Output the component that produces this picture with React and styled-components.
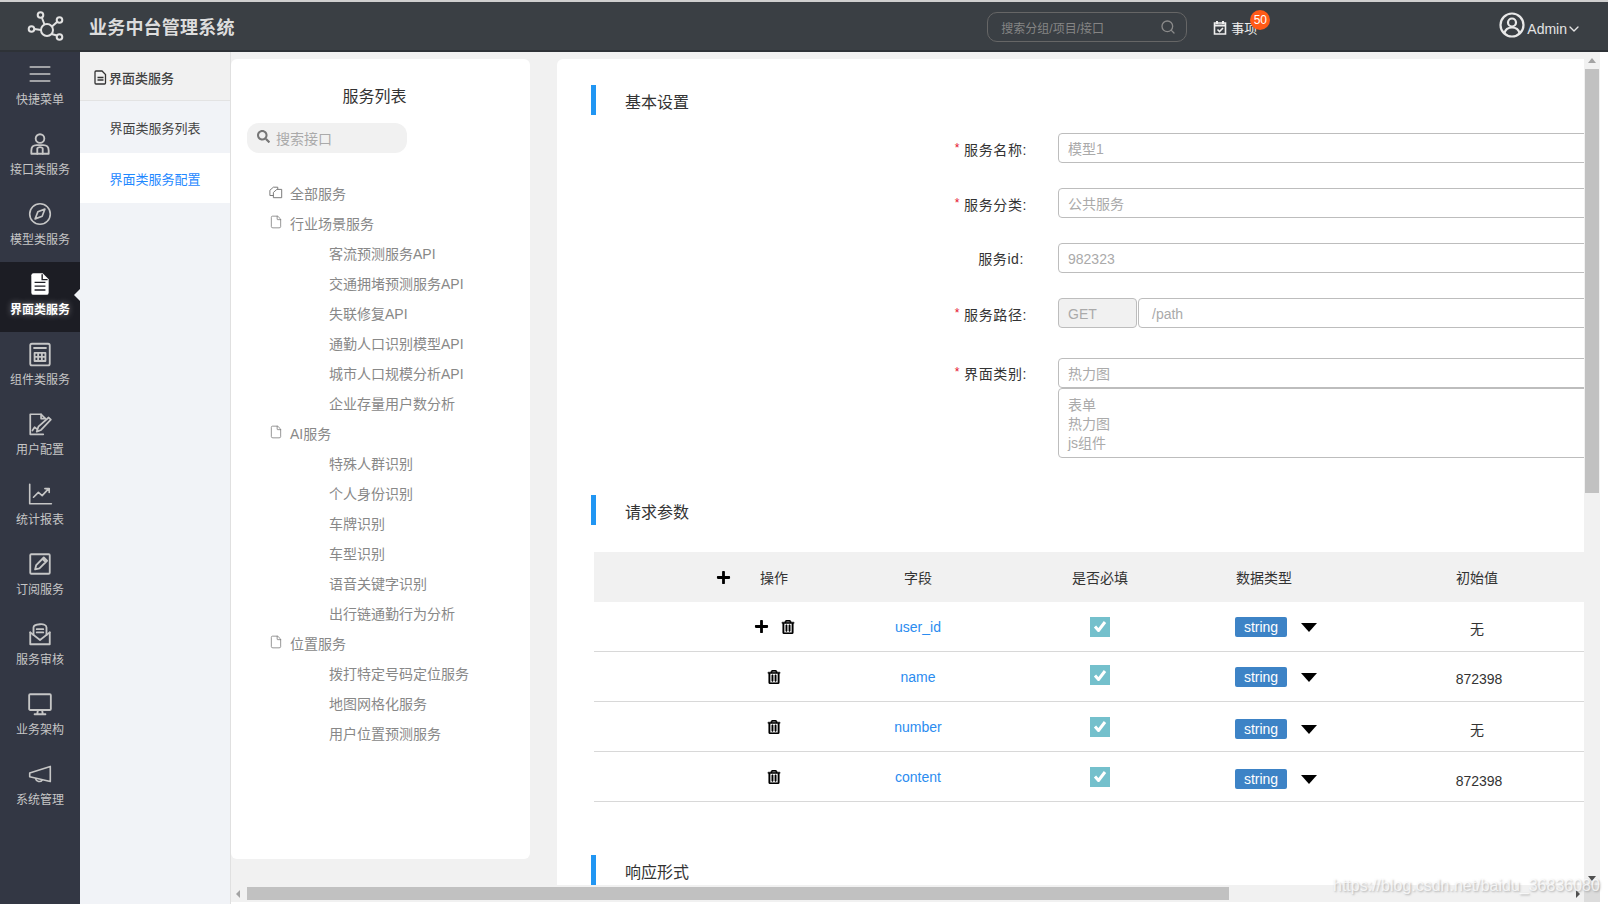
import React from 'react'
import styled, {createGlobalStyle} from 'styled-components'
import {FaPlus, FaRegTrashAlt, FaSearch} from 'react-icons/fa'
import {Search, ChevronDown, File} from 'lucide-react'

const Global = createGlobalStyle`
    html, body {
        margin: 0;
        padding: 0;
        background: #fff;
    }
    body {
        font-family: "Liberation Sans", "Noto Sans CJK SC", sans-serif;
        color: #333;
    }
`

const Page = styled.div`
    width: 1608px;
    height: 904px;
    overflow: hidden;
    display: flex;
    flex-direction: column;
    position: relative;
`

const Header = styled.header`
    height: 48px;
    flex: none;
    display: flex;
    align-items: center;
    background: #3a3f44;
    border-top: 2px solid #cfcfcf;
    border-bottom: 2px solid #2e3237;
    color: #ddd;
`

const Logo = styled.div`
    width: 89px;
    display: flex;
    justify-content: center;
`

const AppTitle = styled.h1`
    margin: 0;
    font-size: 18px;
    font-weight: 700;
    color: #ddd;
    letter-spacing: 0.2px;
    flex: 1;
`

const SearchBox = styled.div`
    width: 200px;
    height: 30px;
    border: 1px solid #666;
    border-radius: 10px;
    display: flex;
    align-items: center;
    justify-content: space-between;
    padding: 0 10px 0 13px;
    box-sizing: border-box;
    color: #858585;
    font-size: 12px;
    margin: 2px 26px 0 0;
`

const Todo = styled.div`
    position: relative;
    width: 286px;
    display: flex;
    align-items: center;
    gap: 4px;
    font-size: 13px;
    padding-top: 2px;
    color: #eee;
`

const Badge = styled.span`
    position: absolute;
    left: 37px;
    top: -6px;
    width: 20px;
    height: 20px;
    border-radius: 50%;
    background: #ff5a17;
    color: #fff;
    font-size: 12px;
    line-height: 20px;
    text-align: center;
`

const UserBox = styled.div`
    display: flex;
    align-items: center;
    padding-right: 26px;
    font-size: 14px;
    color: #e4e4e4;

    > svg:first-child {
        margin-top: -2px;
    }

    > svg:last-child {
        margin: 6px 0 0 -1px;
    }
`

const AdminName = styled.span`
    margin: 6px 0 0 2px;
`

const Body = styled.div`
    flex: 1;
    min-height: 0;
    display: flex;
`

const Sidebar = styled.nav`
    width: 80px;
    flex: none;
    background: #333744;
`

const NavItem = styled.div`
    position: relative;
    height: 70px;
    box-sizing: border-box;
    display: flex;
    flex-direction: column;
    align-items: center;
    padding-top: 9px;
    gap: 4px;
    font-size: 12px;
    line-height: 18px;
    color: ${({$active}) => $active ? '#fff' : '#c6c6c6'};
    font-weight: ${({$active}) => $active ? 700 : 400};
    background: ${({$active}) => $active ? '#1c1d24' : 'transparent'};
    text-shadow: ${({$active}) => $active ? '0 0 6px rgba(255,255,255,.45)' : 'none'};

    svg {
        width: 26px;
        height: 26px;
        display: block;
    }

    ${({$active}) => $active && `
        &::after {
            content: '';
            position: absolute;
            right: 0;
            top: 27px;
            border: 6px solid transparent;
            border-left: 0;
            border-right-color: #f1f3f7;
        }
    `}
`

const SubMenu = styled.aside`
    width: 151px;
    flex: none;
    box-sizing: border-box;
    background: #f1f3f7;
    border-right: 1px solid #e0e0e0;
`

const SubHead = styled.div`
    height: 49px;
    box-sizing: border-box;
    display: flex;
    align-items: center;
    gap: 2px;
    padding: 2px 0 0 14px;
    background: #f1f1f1;
    border-bottom: 1px solid #e3e3e3;
    font-size: 13px;
    font-weight: 500;
    color: #444;
`

const SubItem = styled.div`
    height: ${({$active}) => $active ? '50px' : '52px'};
    display: flex;
    align-items: center;
    justify-content: center;
    font-size: 13px;
    color: ${({$active}) => $active ? '#1e88ff' : '#444'};
    background: ${({$active}) => $active ? '#fff' : 'transparent'};
`

const Workspace = styled.div`
    flex: 1;
    min-width: 0;
    display: flex;
    flex-direction: column;
    padding-bottom: 2px;
`

const WorkRow = styled.div`
    flex: 1;
    min-height: 0;
    display: flex;
`

const Panels = styled.div`
    flex: 1;
    min-width: 0;
    display: flex;
    gap: 27px;
    background: #f1f1f1;
    padding-top: 7px;
`

const ServiceCard = styled.section`
    width: 299px;
    height: 800px;
    flex: none;
    background: #fff;
    border-radius: 6px;
    box-sizing: border-box;
    padding-top: 28px;
`

const CardTitle = styled.div`
    font-size: 16px;
    line-height: 20px;
    text-align: center;
    margin-bottom: 16px;
    padding-right: 12px;
`

const TreeSearch = styled.div`
    width: 160px;
    height: 30px;
    margin-left: 16px;
    border-radius: 12px;
    background: #f1f1f1;
    display: flex;
    align-items: center;
    gap: 6px;
    padding-left: 10px;
    box-sizing: border-box;
    color: #aaa;
    font-size: 14px;

    svg {
        color: #777;
        margin-top: -3px;
    }
`

const Tree = styled.ul`
    list-style: none;
    margin: 25px 0 0;
    padding: 0;
`

const TreeRow = styled.li`
    height: 30px;
    display: flex;
    align-items: center;
    gap: 7px;
    padding-left: ${({$child}) => $child ? '98px' : '38px'};
    font-size: 14px;
    color: #888;

    svg {
        width: 14px;
        height: 14px;
        margin-top: -2px;
    }
`

const MainCard = styled.main`
    flex: 1;
    min-width: 0;
    background: #fff;
    border-radius: 6px 0 0 0;
    overflow: hidden;
    padding-top: 26px;
`

const SectionHead = styled.div`
    height: 30px;
    margin: ${({$top}) => $top || 0}px 0 0 34px;
    border-left: 5px solid #2196f3;
    padding-left: 29px;
    font-size: 16px;
    line-height: 36px;
    color: #333;
`

const Form = styled.div`
    margin-top: 18px;
    display: grid;
    grid-template-columns: 473px 560px;
    column-gap: 28px;
    row-gap: 25px;
`

const Label = styled.div`
    font-size: 14px;
    line-height: 20px;
    padding-top: ${({$top}) => $top || 5}px;
    text-align: right;
    letter-spacing: .6px;
    color: #333;
    padding-right: ${({$short}) => $short ? '6px' : '3px'};

    i {
        color: #e5142d;
        font-style: normal;
        font-size: 12px;
        vertical-align: 3px;
        margin-right: 4px;
    }
`

const Field = styled.div`
    height: 30px;
    box-sizing: border-box;
    border: 1px solid #bdbdbd;
    border-radius: 4px;
    padding-left: 9px;
    font-size: 14px;
    line-height: 30px;
    color: #aaa;
`

const PathGroup = styled.div`
    display: flex;
    gap: 1px;
`

const MethodField = styled(Field)`
    width: 79px;
    flex: none;
    background: #f1f1f1;
`

const PathField = styled(Field)`
    flex: 1;
    padding-left: 13px;
`

const FieldStack = styled.div`
    display: flex;
    flex-direction: column;
    margin-top: 5px;
`

const OptionBox = styled.div`
    height: 70px;
    box-sizing: border-box;
    border: 1px solid #bdbdbd;
    border-radius: 4px;
    padding: 7px 0 0 9px;
    font-size: 14px;
    line-height: 19px;
    color: #aaa;
`

const Table = styled.div`
    margin: 27px 0 0 37px;
`

const gridCols = `
    display: grid;
    grid-template-columns: 150px 138px 226px 164px 200px;
    padding-left: 105px;
    align-items: center;
    font-size: 14px;
`

const HeadRow = styled.div`
    ${gridCols}
    position: relative;
    height: 50px;
    background: #f1f1f1;
    color: #333;
`

const BodyRow = styled.div`
    ${gridCols}
    height: 50px;
    box-sizing: border-box;
    border-bottom: 1px solid #d8d8d8;
`

const Cell = styled.div`
    text-align: center;
`

const TypeHead = styled.div`
    padding-left: 23px;
`

const HeadPlus = styled.span`
    position: absolute;
    left: 122px;
    top: 18px;
    font-size: 15px;
    color: #000;
    line-height: 0;
`

const Actions = styled.div`
    display: flex;
    justify-content: center;
    align-items: center;
    gap: 12px;
    color: #000;
    font-size: 15px;

    svg {
        display: block;
    }
`

const FieldName = styled.div`
    text-align: center;
    color: #2b8cf0;
`

const Check = styled.div`
    width: 20px;
    height: 20px;
    margin: ${({$nudge}) => $nudge || 0}px auto 0;
    background: #74c0cc;
    display: flex;
    align-items: center;
    justify-content: center;
`

const TypeCell = styled.div`
    display: flex;
    align-items: center;
    gap: 14px;
    padding-left: 22px;
    margin-top: ${({$nudge}) => $nudge || 0}px;
`

const TypeBadge = styled.span`
    width: 52px;
    height: 20px;
    background: #3d83c6;
    border-radius: 2px;
    color: #fff;
    font-size: 14px;
    line-height: 20px;
    text-align: center;
`

const Caret = styled.span`
    width: 0;
    height: 0;
    margin-top: 1px;
    border: 8.5px solid transparent;
    border-bottom: 0;
    border-top: 9px solid #000;
`

const InitCell = styled.div`
    text-align: center;
    font-size: 14px;
    padding-top: ${({$nudge}) => $nudge}px;
    padding-left: ${({$num}) => $num ? '4px' : 0};
    color: #333;
`

const VScroll = styled.div`
    width: 16px;
    flex: none;
    background: #f1f1f1;
    display: flex;
    flex-direction: column;
    align-items: center;
    padding-top: 6px;
    box-sizing: border-box;
`

const VThumb = styled.div`
    width: 14px;
    height: 424px;
    background: #c1c1c1;
    margin-top: 6px;
`

const Arrow = styled.span`
    width: 0;
    height: 0;
    border: 4px solid transparent;
    ${({$dir}) => $dir === 'up' && 'border-top: 0; border-bottom: 5px solid #a3a3a3;'}
    ${({$dir}) => $dir === 'down' && 'border-bottom: 0; border-top: 5px solid #505050; margin-top: auto; margin-bottom: 4px;'}
    ${({$dir}) => $dir === 'left' && 'border-left: 0; border-right: 4px solid #a3a3a3;'}
    ${({$dir}) => $dir === 'right' && 'border-right: 0; border-left: 4px solid #505050; margin-left: auto; margin-right: 4px;'}
`

const HScroll = styled.div`
    height: 17px;
    flex: none;
    display: flex;
    background: #f1f1f1;
`

const HTrack = styled.div`
    flex: 1;
    display: flex;
    align-items: center;
    padding-left: 5px;
`

const HThumb = styled.div`
    width: 982px;
    height: 13px;
    margin-left: 7px;
    background: #c1c1c1;
`

const ScrollCorner = styled.div`
    width: 16px;
    background: #dcdcdc;
`

const Gutter = styled.div`
    width: 8px;
    flex: none;
    background: #fff;
`

const Watermark = styled.div`
    position: absolute;
    left: 1333px;
    top: 875px;
    font-size: 16px;
    line-height: 22px;
    white-space: nowrap;
    color: rgba(255, 255, 255, .75);
    text-shadow: 1px 1px 2px rgba(120, 120, 120, .55);
`

const strokeProps = {viewBox: '0 0 24 24', fill: 'none', stroke: 'currentColor', strokeWidth: 1.5, strokeLinecap: 'round', strokeLinejoin: 'round'}

const NAV_ICONS = {
    menu: <svg {...strokeProps}><path d="M3 5.500h18M3 12h18M3 18.500h18"/></svg>,
    people: <svg {...strokeProps} strokeWidth="1.700"><circle cx="12" cy="7" r="4"/><path d="M4 21v-3c0-3 2-5 5-5h6c3 0 5 2 5 5v3z"/><path d="M9.500 21v-5M14.500 21v-5M9.500 16c1-1.500 4-1.500 5 0"/></svg>,
    compass: <svg {...strokeProps}><circle cx="12" cy="12" r="9.500"/><path d="M16.500 7.500l-2.500 6.500-6.500 2.500 2.500-6.500z"/></svg>,
    file: <svg viewBox="0 0 24 24" fill="#fff"><path d="M6 2h8.500L20 7.500V20a2 2 0 0 1-2 2H6a2 2 0 0 1-2-2V4a2 2 0 0 1 2-2z"/><path d="M7 10.500h10M7 14h10M7 17.500h10M14 3v5h5" stroke="#1c1d24" strokeWidth="1.300" fill="none"/></svg>,
    calc: <svg {...strokeProps} strokeWidth="1.700"><rect x="3" y="2.500" width="18" height="20" rx="1.500"/><path d="M6.500 6.500h11M7 11h10v7.500H7zM10.300 11v7.500M13.700 11v7.500M7 14.700h10"/></svg>,
    edit: <svg {...strokeProps} strokeWidth="1.600"><path d="M15 21.500H3V3h10l3.500 3.500"/><path d="M13 3v4h4"/><path d="M9 19l1.500-4.500L20 6l2 2-9 9.500z"/><path d="M5 18l2-3 2 1.500"/></svg>,
    chart: <svg {...strokeProps}><path d="M2.500 3v18h20"/><path d="M6 15l4.500-4.500 3.500 3 6-6.500M16.500 7H20.500v3.500"/></svg>,
    pencil: <svg {...strokeProps} strokeWidth="1.700"><rect x="3" y="3" width="18" height="18" rx="1"/><path d="M7.500 17l1-4 7-7 3 3-7 7zM14.500 7.500l2.500 2.500"/></svg>,
    mail: <svg {...strokeProps} strokeWidth="1.700"><path d="M3 10.500V21.500h18V10.500"/><path d="M6 13V6c0-3 12-5 12 0v7"/><path d="M3 10.500l9 7 9-7M9 7.500h6M9 10.500h6"/></svg>,
    monitor: <svg {...strokeProps} strokeWidth="1.700"><rect x="2" y="3" width="20" height="14.500" rx="1"/><path d="M10 18l-.5 3M14 18l.5 3M7 21.500h10"/></svg>,
    horn: <svg {...strokeProps}><path d="M2.500 11L21.500 5v14L2.500 14.500z"/><path d="M8 16.500c.5 2.500 4.500 3.500 6 1"/></svg>,
}

const NAV = [
    ['menu', '快捷菜单'],
    ['people', '接口类服务'],
    ['compass', '模型类服务'],
    ['file', '界面类服务', true],
    ['calc', '组件类服务'],
    ['edit', '用户配置'],
    ['chart', '统计报表'],
    ['pencil', '订阅服务'],
    ['mail', '服务审核'],
    ['monitor', '业务架构'],
    ['horn', '系统管理'],
]

const TREE = [
    {name: '全部服务', icon: 'all'},
    {name: '行业场景服务', icon: 'file'},
    {name: '客流预测服务API'},
    {name: '交通拥堵预测服务API'},
    {name: '失联修复API'},
    {name: '通勤人口识别模型API'},
    {name: '城市人口规模分析API'},
    {name: '企业存量用户数分析'},
    {name: 'AI服务', icon: 'file'},
    {name: '特殊人群识别'},
    {name: '个人身份识别'},
    {name: '车牌识别'},
    {name: '车型识别'},
    {name: '语音关键字识别'},
    {name: '出行链通勤行为分析'},
    {name: '位置服务', icon: 'file'},
    {name: '拨打特定号码定位服务'},
    {name: '地图网格化服务'},
    {name: '用户位置预测服务'},
]

const ROWS = [
    {name: 'user_id', init: '无', plus: true, check: 0, type: 0, initTop: 2},
    {name: 'name', init: '872398', check: -3, type: 0, initTop: 4},
    {name: 'number', init: '无', check: 0, type: 5, initTop: 4},
    {name: 'content', init: '872398', check: 0, type: 5, initTop: 8},
]

const AllIcon = () => <svg viewBox="0 0 16 16" fill="none" stroke="#777" strokeWidth="1.100">
    <path d="M1 6L5 2.500H10V5M1 6V12H5"/>
    <path d="M5 14.500V8.500L9 5H14.500V14.500Z"/>
</svg>

const Logomark = () => <svg width="40" height="32" viewBox="0 0 40 32" fill="none" stroke="#e2e2e2" strokeWidth="2">
    <circle cx="22" cy="20" r="6"/>
    <circle cx="15.500" cy="5" r="2.800"/>
    <circle cx="34.500" cy="10" r="2.800"/>
    <circle cx="34.500" cy="27" r="2.800"/>
    <circle cx="6.500" cy="19" r="2.800"/>
    <path d="M17 8l2.500 6.500M32 12l-5 4.500M32 25.500l-5.500-1.500M9.500 19l6.500 1"/>
</svg>

const CalendarIcon = () => <svg width="14" height="15" viewBox="0 0 14 15" fill="none" stroke="#eee" strokeWidth="1.600">
    <path d="M1.500 3h11v11h-11z"/>
    <path d="M1.500 5.500h11M4 1v3M10 1v3" strokeWidth="2"/>
    <path d="M4.500 9.500l2 2 3.500-3.500"/>
</svg>

const UserIcon = () => <svg width="26" height="26" viewBox="0 0 26 26" fill="none" stroke="#e8e8e8" strokeWidth="2.200">
    <circle cx="13" cy="13" r="11.500"/>
    <circle cx="13" cy="10.500" r="4"/>
    <path d="M5.500 21c1-4 4-5.500 7.500-5.500s6.500 1.500 7.500 5.500"/>
</svg>

const DocIcon = () => <svg width="13" height="15" viewBox="0 0 13 15" fill="none" stroke="#333" strokeWidth="1.300">
    <path d="M2 1h6l3.500 3.500V13a1 1 0 0 1-1 1H2a1 1 0 0 1-1-1V2a1 1 0 0 1 1-1z"/>
    <path d="M3.500 7.500h6M3.500 10h6" strokeWidth="1.500"/>
</svg>

const Tick = () => <svg width="14" height="13" viewBox="0 0 14 13" fill="none" stroke="#fff" strokeWidth="3" strokeLinejoin="round">
    <path d="M2 6.500l3.500 4L12 2"/>
</svg>

export default function App() {
    return <Page>
        <Global/>
        <Header>
            <Logo><Logomark/></Logo>
            <AppTitle>业务中台管理系统</AppTitle>
            <SearchBox>
                搜索分组/项目/接口
                <Search size={16} color="#8a8a8a"/>
            </SearchBox>
            <Todo>
                <CalendarIcon/>事项
                <Badge>50</Badge>
            </Todo>
            <UserBox>
                <UserIcon/>
                <AdminName>Admin</AdminName>
                <ChevronDown size={16} color="#e4e4e4"/>
            </UserBox>
        </Header>
        <Body>
            <Sidebar>
                {NAV.map(([icon, label, active]) => <NavItem key={label} $active={active}>
                    {NAV_ICONS[icon]}
                    {label}
                </NavItem>)}
            </Sidebar>
            <SubMenu>
                <SubHead><DocIcon/>界面类服务</SubHead>
                <SubItem>界面类服务列表</SubItem>
                <SubItem $active>界面类服务配置</SubItem>
            </SubMenu>
            <Workspace>
                <WorkRow>
                    <Panels>
                        <ServiceCard>
                            <CardTitle>服务列表</CardTitle>
                            <TreeSearch><FaSearch size={13}/>搜索接口</TreeSearch>
                            <Tree>
                                {TREE.map(item => <TreeRow key={item.name} $child={!item.icon}>
                                    {item.icon === 'all' && <AllIcon/>}
                                    {item.icon === 'file' && <File strokeWidth={1.3} color="#777"/>}
                                    {item.name}
                                </TreeRow>)}
                            </Tree>
                        </ServiceCard>
                        <MainCard>
                            <SectionHead>基本设置</SectionHead>
                            <Form>
                                <Label><i>*</i>服务名称:</Label>
                                <Field>模型1</Field>
                                <Label><i>*</i>服务分类:</Label>
                                <Field>公共服务</Field>
                                <Label $short $top={6}>服务id:</Label>
                                <Field>982323</Field>
                                <Label><i>*</i>服务路径:</Label>
                                <PathGroup>
                                    <MethodField>GET</MethodField>
                                    <PathField>/path</PathField>
                                </PathGroup>
                                <Label $top={9}><i>*</i>界面类别:</Label>
                                <FieldStack>
                                    <Field>热力图</Field>
                                    <OptionBox>表单<br/>热力图<br/>js组件</OptionBox>
                                </FieldStack>
                            </Form>
                            <SectionHead $top={37}>请求参数</SectionHead>
                            <Table>
                                <HeadRow>
                                    <HeadPlus><FaPlus/></HeadPlus>
                                    <Cell>操作</Cell>
                                    <Cell>字段</Cell>
                                    <Cell>是否必填</Cell>
                                    <TypeHead>数据类型</TypeHead>
                                    <Cell>初始值</Cell>
                                </HeadRow>
                                {ROWS.map(row => <BodyRow key={row.name}>
                                    <Actions>
                                        {row.plus && <FaPlus/>}
                                        <FaRegTrashAlt size={14} strokeWidth={20} stroke="#000"/>
                                    </Actions>
                                    <FieldName>{row.name}</FieldName>
                                    <Check $nudge={row.check}><Tick/></Check>
                                    <TypeCell $nudge={row.type}>
                                        <TypeBadge>string</TypeBadge>
                                        <Caret/>
                                    </TypeCell>
                                    <InitCell $num={row.init !== '无'} $nudge={row.initTop}>{row.init}</InitCell>
                                </BodyRow>)}
                            </Table>
                            <SectionHead $top={53}>响应形式</SectionHead>
                        </MainCard>
                    </Panels>
                    <VScroll>
                        <Arrow $dir="up"/>
                        <VThumb/>
                        <Arrow $dir="down"/>
                    </VScroll>
                    <Gutter/>
                </WorkRow>
                <HScroll>
                    <HTrack>
                        <Arrow $dir="left"/>
                        <HThumb/>
                        <Arrow $dir="right"/>
                    </HTrack>
                    <ScrollCorner/>
                    <Gutter/>
                </HScroll>
            </Workspace>
        </Body>
        <Watermark>https://blog.csdn.net/baidu_36836080</Watermark>
    </Page>
}
